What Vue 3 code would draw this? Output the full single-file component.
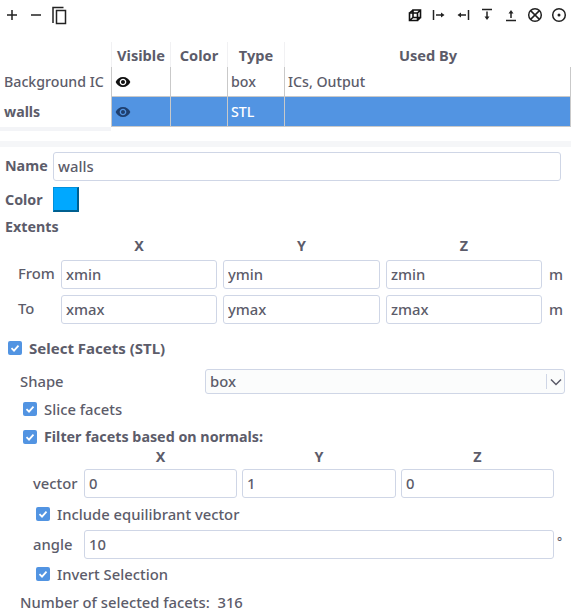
<template>
  <div class="panel">
    <div class="toolbar">
      <button v-for="icon in leftIcons" :key="icon" class="tool">
        <svg width="24" height="24" viewBox="0 0 24 24" v-html="icon"></svg>
      </button>
      <span class="spacer"></span>
      <button v-for="icon in rightIcons" :key="icon" class="tool">
        <svg width="24" height="24" viewBox="0 0 24 24" v-html="icon"></svg>
      </button>
    </div>

    <div class="table-wrap">
      <table class="surfaces">
        <colgroup>
          <col style="width: 111px" />
          <col style="width: 59px" />
          <col style="width: 57px" />
          <col style="width: 57px" />
          <col />
        </colgroup>
        <thead>
          <tr>
            <th class="corner"></th>
            <th v-for="h in headers" :key="h">{{ h }}</th>
          </tr>
        </thead>
        <tbody>
          <tr v-for="row in rows" :key="row.name" :class="{ selected: row.selected }">
            <th class="row-head">{{ row.name }}</th>
            <td class="eye-cell">
              <svg width="16" height="16" viewBox="0 0 24 24">
                <path d="M12 4.500C7 4.500 2.700 7.600 1 12c1.700 4.400 6 7.500 11 7.500s9.300-3.100 11-7.500c-1.700-4.400-6-7.500-11-7.500zM12 17c-2.800 0-5-2.200-5-5s2.200-5 5-5 5 2.200 5 5-2.200 5-5 5zm0-8c-1.700 0-3 1.300-3 3s1.300 3 3 3 3-1.300 3-3-1.300-3-3-3z" />
              </svg>
            </td>
            <td></td>
            <td>{{ row.type }}</td>
            <td>{{ row.usedBy }}</td>
          </tr>
        </tbody>
      </table>
      <div class="row-head-tail"></div>
    </div>

    <div class="splitter"></div>

    <div class="form">
      <div class="name-row">
        <label class="bold">Name</label>
        <input class="field" value="walls" />
      </div>
      <div class="color-row">
        <label class="bold">Color</label>
        <span class="swatch"></span>
      </div>
      <div class="bold extents-title">Extents</div>

      <div class="extents-grid">
        <span></span>
        <span v-for="a in axes" :key="a" class="axis bold">{{ a }}</span>
        <span></span>
        <template v-for="row in extents" :key="row.label">
          <label class="row-label">{{ row.label }}</label>
          <input v-for="v in row.values" :key="v" class="field" :value="v" />
          <span class="unit">m</span>
        </template>
      </div>

      <label class="check bold facets-check"><span class="box"><svg width="14" height="14" viewBox="0 0 14 14"><path d="M3.500 7.200l2.500 2.400 4.500-5" /></svg></span>Select Facets (STL)</label>

      <div class="shape-row">
        <label>Shape</label>
        <div class="select">
          <span>box</span>
          <span class="select-arrow">
            <svg width="12" height="8" viewBox="0 0 12 8"><path d="M1 1.500l5 5 5-5" /></svg>
          </span>
        </div>
      </div>

      <label class="check slice-check"><span class="box"><svg width="14" height="14" viewBox="0 0 14 14"><path d="M3.500 7.200l2.500 2.400 4.500-5" /></svg></span>Slice facets</label>
      <label class="check bold filter-check"><span class="box"><svg width="14" height="14" viewBox="0 0 14 14"><path d="M3.500 7.200l2.500 2.400 4.500-5" /></svg></span>Filter facets based on normals:</label>

      <div class="vector-grid">
        <span></span>
        <span v-for="a in axes" :key="a" class="axis bold">{{ a }}</span>
        <label>vector</label>
        <input v-for="(v, i) in vector" :key="i" class="field" :value="v" />
      </div>

      <label class="check include-check"><span class="box"><svg width="14" height="14" viewBox="0 0 14 14"><path d="M3.500 7.200l2.500 2.400 4.500-5" /></svg></span>Include equilibrant vector</label>

      <div class="angle-row">
        <label>angle</label>
        <input class="field" value="10" />
        <span class="degree">°</span>
      </div>

      <label class="check invert-check"><span class="box"><svg width="14" height="14" viewBox="0 0 14 14"><path d="M3.500 7.200l2.500 2.400 4.500-5" /></svg></span>Invert Selection</label>

      <div class="count">Number of selected facets:&nbsp; 316</div>
    </div>
  </div>
</template>

<script setup>
const stroke = 'fill="none" stroke="#222" stroke-width="1.500"'

const leftIcons = [
  `<path d="M7 13H17M12 8V18" ${stroke}/>`,
  `<path d="M7 13H17" ${stroke}/>`,
  `<path d="M5 21V5.500H15.500M8.500 8.500H17.500V21.500H8.500Z" ${stroke} stroke-width="1.600"/>`,
]

const rightIcons = [
  `<path d="M6.500 11H14.500V18.500H6.500ZM10 8H17.500V15.500H10ZM6.500 11L10 8M14.500 11L17.500 8M14.500 18.500L17.500 15.500M6.500 18.500L10 15.500" fill="none" stroke="#111" stroke-width="1.600"/>`,
  `<path d="M6.500 8V18" ${stroke} stroke-width="1.300"/><path d="M9 13H14.500" ${stroke} stroke-width="1.300"/><path d="M14 10.500L17.500 13L14 15.500Z" fill="#222"/>`,
  `<path d="M17.500 8V18" ${stroke} stroke-width="1.300"/><path d="M9.500 13H15" ${stroke} stroke-width="1.300"/><path d="M10 10.500L6.500 13L10 15.500Z" fill="#222"/>`,
  `<path d="M7 7.500H17M12 9.500V15" ${stroke} stroke-width="1.300"/><path d="M9.500 14.500L12 18L14.500 14.500Z" fill="#222"/>`,
  `<path d="M7 18.500H17M12 11V16" ${stroke} stroke-width="1.300"/><path d="M9.500 11.500L12 8L14.500 11.500Z" fill="#222"/>`,
  `<circle cx="12" cy="13" r="6.300" ${stroke}/><path d="M7.600 8.600L16.400 17.400M16.400 8.600L7.600 17.400" ${stroke}/>`,
  `<circle cx="12" cy="13" r="6.300" ${stroke}/><circle cx="12" cy="13" r="1.500" fill="#222"/>`,
]

const headers = ['Visible', 'Color', 'Type', 'Used By']

const rows = [
  { name: 'Background IC', type: 'box', usedBy: 'ICs, Output', selected: false },
  { name: 'walls', type: 'STL', usedBy: '', selected: true },
]

const axes = ['X', 'Y', 'Z']

const extents = [
  { label: 'From', values: ['xmin', 'ymin', 'zmin'] },
  { label: 'To', values: ['xmax', 'ymax', 'zmax'] },
]

const vector = ['0', '1', '0']
</script>

<style>
html,
body {
  background: #fff;
  overflow: hidden;
}
</style>

<style scoped>
.panel {
  width: 571px;
  height: 613px;
  overflow: hidden;
  font-family: "Noto Sans", "Open Sans", sans-serif;
  font-size: 14.8px;
  font-weight: 500;
  color: #5c5c6a;
  background: #fff;
}

label {
  display: block;
}

.bold {
  font-size: 14.300px;
  font-weight: 700;
}

.toolbar {
  display: flex;
  height: 42px;
  align-items: flex-start;
}

.spacer {
  flex: 1;
}

.tool {
  width: 24px;
  height: 26px;
  padding: 1px 0 0;
  border: 0;
  background: none;
}

.tool svg {
  display: block;
}

.table-wrap {
  position: relative;
  height: 99px;
}

.surfaces {
  width: 571px;
  table-layout: fixed;
  border-collapse: separate;
  border-spacing: 0;
}

.surfaces th,
.surfaces td {
  padding: 0;
  font-size: 14.200px;
  white-space: nowrap;
}

.surfaces thead th {
  height: 25px;
  font-size: 14.600px;
  font-weight: 700;
  text-align: center;
  border-left: 1px solid #f1f1f3;
}

.surfaces thead .corner {
  border-left: 0;
}

.surfaces tbody td {
  height: 29px;
  padding-left: 3px;
  border-left: 1px solid #c9c9c9;
  border-bottom: 1px solid #c9c9c9;
}

.surfaces tbody td:last-child {
  border-right: 1px solid #c9c9c9;
}

.surfaces .row-head {
  padding-left: 4px;
  text-align: left;
  font-weight: 500;
  background: #fff;
  border-bottom: 1px solid #fff;
}

.surfaces tbody .selected .row-head {
  font-weight: 700;
}

.surfaces tbody .selected td {
  background: #5294e2;
  color: #fff;
  font-weight: 500;
}

.surfaces .eye-cell svg {
  display: block;
  fill: #111;
}

.surfaces .selected .eye-cell svg {
  fill: #1f3f6e;
}

.row-head-tail {
  width: 111px;
  height: 4px;
  background: #f3f4f7;
}

.splitter {
  height: 6px;
  background: #f5f6f8;
}

.form {
  padding-top: 5px;
}

.field {
  display: block;
  box-sizing: border-box;
  width: 100%;
  min-width: 0;
  height: 29px;
  padding: 0 4px 2px;
  border: 1px solid #cfd6e6;
  border-radius: 3px;
  outline: none;
  background: #fff;
  font: inherit;
  color: inherit;
}

.name-row {
  display: flex;
  align-items: center;
  padding: 0 10px 0 5px;
}

.name-row label {
  width: 48px;
  flex: none;
  padding-bottom: 2px;
}

.color-row {
  display: flex;
  align-items: center;
  margin-top: 6px;
  padding-left: 5px;
}

.color-row label {
  width: 48px;
}

.swatch {
  box-sizing: border-box;
  width: 26px;
  height: 25px;
  background: #00a8ff;
  border: 1px solid #005f8f;
  border-top-color: #0090dc;
  border-left-color: #0090dc;
  border-right-width: 2px;
  border-bottom-width: 2px;
}

.extents-title {
  margin-top: 5px;
  padding-left: 5px;
  line-height: 20px;
}

.extents-grid {
  display: grid;
  grid-template-columns: 55px 156px 157px 156px auto;
  column-gap: 6px;
  row-gap: 6px;
  margin-top: -1px;
  align-items: center;
}

.axis {
  text-align: center;
  line-height: 17px;
}

.extents-grid .axis {
  padding-top: 1px;
}

.row-label {
  padding-left: 18px;
  padding-bottom: 3px;
}

.unit {
  padding-left: 1px;
  padding-bottom: 2px;
}

.check {
  display: flex;
  align-items: center;
  height: 20px;
  line-height: 20px;
}

.box {
  display: block;
  flex: none;
  width: 14px;
  height: 14px;
  margin-right: 7px;
  background: #5294e2;
  border-radius: 2px;
}

.box svg {
  display: block;
}

.box path {
  fill: none;
  stroke: #fff;
  stroke-width: 1.800;
}

.facets-check {
  margin-top: 14px;
  padding-left: 8px;
  font-size: 15px;
}

.shape-row {
  display: flex;
  align-items: center;
  margin-top: 11px;
  padding: 0 6px 0 20px;
}

.shape-row label {
  width: 185px;
  flex: none;
  padding-bottom: 2px;
}

.select {
  flex: 1;
  display: flex;
  align-items: center;
  justify-content: space-between;
  box-sizing: border-box;
  height: 25px;
  padding-left: 4px;
  border: 1px solid #cfd6e6;
  border-radius: 3px;
  background: #fbfcfc;
}

.select > span:first-child {
  margin-top: -1px;
}

.select-arrow {
  display: flex;
  align-items: center;
  justify-content: center;
  width: 17px;
  height: 15px;
  border-left: 1px solid #cfd6e6;
}

.select-arrow path {
  fill: none;
  stroke: #5a5a68;
  stroke-width: 1.500;
}

.slice-check {
  margin-top: 5px;
  padding-left: 23px;
}

.filter-check {
  margin-top: 8px;
  padding-left: 23px;
}

.vector-grid {
  display: grid;
  grid-template-columns: 79px 153px 154px 153px;
  column-gap: 5px;
  align-items: center;
  margin-top: -1px;
}

.vector-grid > :nth-child(5) {
  padding-left: 33px;
  padding-bottom: 2px;
}

.vector-grid .axis {
  margin-bottom: 4px;
  padding-top: 2px;
}

.include-check {
  margin-top: 6px;
  padding-left: 36px;
}

.angle-row {
  display: flex;
  align-items: center;
  margin-top: 6px;
  padding-left: 33px;
}

.angle-row label {
  width: 51px;
  flex: none;
  padding-bottom: 2px;
}

.angle-row .field {
  width: 470px;
  flex: none;
}

.degree {
  padding-left: 3px;
  margin-top: -6px;
  font-size: 12px;
}

.invert-check {
  margin-top: 5px;
  padding-left: 36px;
}

.count {
  margin-top: 8px;
  padding-left: 20px;
  line-height: 20px;
}
</style>
